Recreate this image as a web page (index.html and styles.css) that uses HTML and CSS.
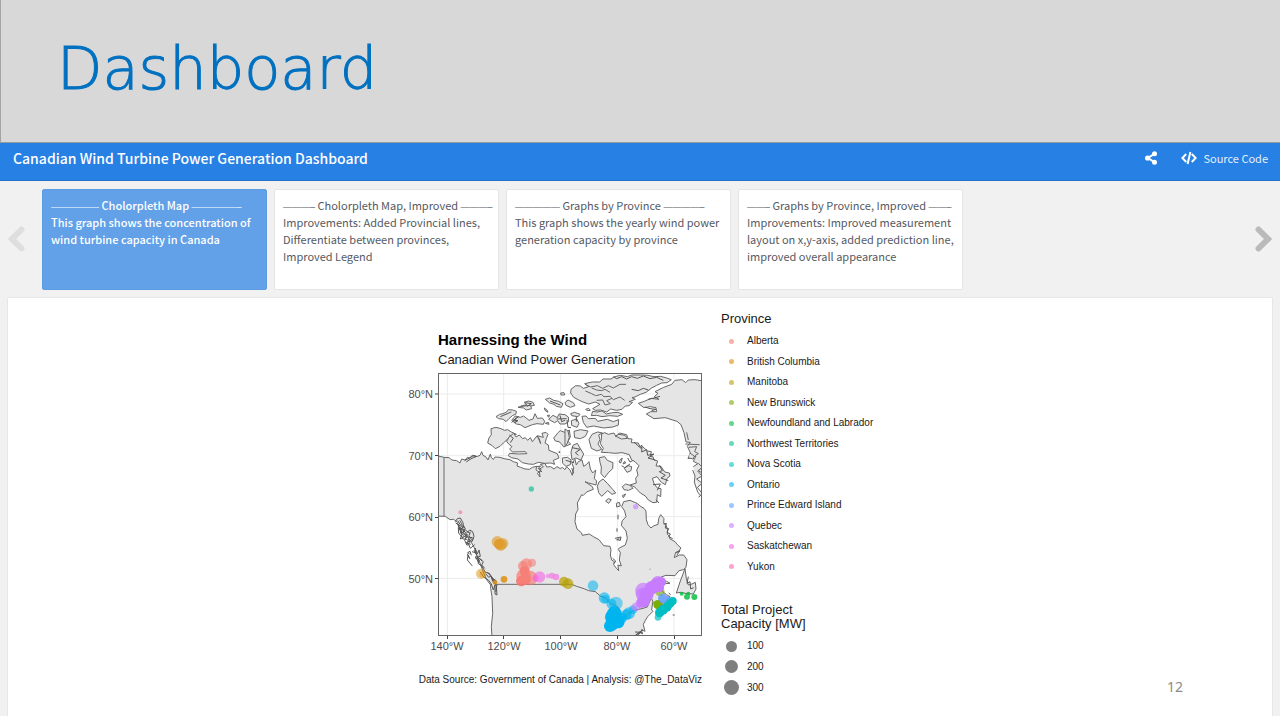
FILE: index.html
```html
<!DOCTYPE html>
<html lang="en">
<head>
<meta charset="utf-8">
<title>Canadian Wind Turbine Power Generation Dashboard</title>
<link rel="stylesheet" href="styles.css">
</head>
<body>
<header class="slide-header"><h1 class="slide-title">Dashboard</h1></header>
<nav class="navbar">
  <h2 class="brand">Canadian Wind Turbine Power Generation Dashboard</h2>
  <div class="nav-links">
    <button class="nav-button" type="button" aria-label="Share">
      <svg width="12" height="14" viewBox="0 0 12 14" fill="#fff"><path d="M9.5 2.8 2.8 7l6.7 4.2" fill="none" stroke="#fff" stroke-width="2"/><circle cx="9.5" cy="2.8" r="2.5"/><circle cx="2.6" cy="7" r="2.6"/><circle cx="9.5" cy="11.2" r="2.5"/></svg>
    </button>
    <a class="nav-link" href="#source">
      <svg width="16" height="14" viewBox="0 0 16 14" fill="none" stroke="#fff" stroke-width="2"><path d="M5.2 3 1.4 7l3.8 4M10.8 3l3.8 4-3.8 4M9.4 1 6.6 13"/></svg>
      <span>Source Code</span>
    </a>
  </div>
</nav>
<main class="storyboard">
  <div class="story-nav">
    <button class="arrow arrow-prev" type="button" aria-label="Previous"><svg width="18" height="28" viewBox="0 0 18 28"><path d="M14.5 3.500 5 13l9.500 9.500"/></svg></button>
    <div class="cards">
      <button class="card active" type="button"><span><span class="rule">—————-</span> Cholorpleth Map <span class="rule">—————–</span><br>This graph shows the concentration of wind turbine capacity in Canada</span></button>
      <button class="card" type="button"><span><span class="rule">———–</span> Cholorpleth Map, Improved <span class="rule">———–</span><br>Improvements: Added Provincial lines, Differentiate between provinces, Improved Legend</span></button>
      <button class="card" type="button"><span><span class="rule">—————</span> Graphs by Province <span class="rule">————–</span><br>This graph shows the yearly wind power generation capacity by province</span></button>
      <button class="card" type="button"><span><span class="rule">——–</span> Graphs by Province, Improved <span class="rule">——–</span><br>Improvements: Improved measurement layout on x,y-axis, added prediction line, improved overall appearance</span></button>
    </div>
    <button class="arrow arrow-next" type="button" aria-label="Next"><svg width="18" height="28" viewBox="0 0 18 28"><path d="M3.500 3.500 13 13l-9.500 9.500"/></svg></button>
  </div>
  <section class="panel">
    <figure class="chart">
      <svg class="plot" width="300" height="390" viewBox="408 310 300 390" role="img" aria-label="Map of Canadian wind power generation">
        <defs><clipPath id="frame"><rect x="26" y="11" width="789" height="786"/></clipPath></defs>
        <text class="plot-title" x="438" y="345">Harnessing the Wind</text>
        <text class="plot-subtitle" x="438" y="364">Canadian Wind Power Generation</text>
        <g class="map" transform="translate(430 370) scale(.33333)" clip-path="url(#frame)">
          <path class="grid" d="M52 11V797M221 11V797M392 11V797M562 11V797M732 11V797M26 72H815M26 257H815M26 440H815M26 625H815"/>
          <g class="land">
            <path d="M20 257 42 262 58 263 65 270 80 272 90 279 95 267 105 270 112 262 119 264 127 256 135 260 143 259 150 256 155 245 159 256 168 261 174 270 181 252 184 263 190 268 195 261 210 262 222 266 240 269 250 275 263 279 261 288 272 292 285 297 298 298 307 292 320 289 318 300 328 306 322 310 330 321 328 303 336 305 327 298 340 290 331 283 345 280 350 291 362 290 372 297 381 290 391 296 397 292 405 299 410 290 420 300 427 316 431 294 426 280 435 268 439 285 445 275 456 270 461 289 470 283 477 275 481 297 488 309 497 300 493 326 500 333 498 345 475 339 465 335 487 350 490 358 470 366 459 377 455 374 442 399 444 418 437 432 435 455 441 477 455 489 457 496 478 492 490 500 507 509 521 527 540 529 543 540 541 555 545 570 553 575 551 584 560 596 566 602 564 585 574 588 568 570 571 548 565 538 568 534 586 525 592 505 588 483 574 466 577 452 588 440 584 423 575 410 581 395 600 391 621 400 633 410 642 415 648 423 649 449 654 464 663 474 670 468 684 463 686 446 692 434 702 446 701 460 708 466 713 478 712 492 719 500 719 506 735 515 742 524 753 534 745 545 736 550 733 563 748 555 761 555 771 569 768 592 760 599 747 602 735 617 708 616 694 621 684 628 668 647 662 660 681 648 697 631 710 634 720 640 704 641 694 653 699 666 710 674 720 680 700 700 683 724 683 706 668 697 665 720 669 724 653 740 646 751 640 763 643 777 645 784 634 779 638 792 629 786 624 799H186L184 770 188 730 186 680 182 655 182 645 172 632 162 612 151 582 142 560 133 533 125 519 111 496 93 485 82 457 71 448 60 449 46 439 20 438Z"/>
            <path d="M183 176 198 172 213 176 223 181 233 179 244 186 259 193 245 197 232 208 220 219 210 229 196 236 187 227 173 219 177 204 184 194Z"/>
            <path d="M238 200 251 190 258 201 268 195 278 206 286 203 293 211 301 203 307 215 321 198 328 207 332 221 322 197 340 202 336 190 348 187 354 193 349 206 345 219 355 225 357 241 382 251 387 264 370 271 374 283 362 279 344 280 325 277 310 283 295 282 277 278 264 267 244 263 235 257 239 250 265 252 291 251 286 245 247 246 239 237 246 230 236 222 230 214Z"/>
            <path d="M198 140 209 133 219 131 230 126 235 119 248 120 259 124 258 132 247 137 237 146 228 155 220 148 206 146Z"/>
            <path d="M245 151 256 138 271 142 281 138 297 151 309 147 315 131 322 145 337 144 344 154 340 163 321 161 307 164 285 173 271 164 259 162Z"/>
            <path d="M264 112 277 107 290 104 282 97 296 93 309 97 313 106 302 108 305 116 289 120 281 114Z"/>
            <path d="M346 88 359 84 371 91 386 94 399 101 394 112 379 109 372 103 359 99ZM392 69 402 68 404 75 393 75ZM343 114 351 120 354 127 345 121ZM352 136 359 136 356 142ZM356 148 369 136 382 143 387 132 405 134 415 141 416 155 405 162 390 162 383 152 374 158ZM371 204 385 187 391 182 407 188 418 180 421 201 414 214 422 222 401 231 395 222 387 215 376 213ZM346 160 355 157 357 163ZM386 246 389 244 389 249ZM397 264 413 262 423 270 421 284 408 289 398 280ZM405 98 414 90 430 98 435 107 421 112 408 106Z"/>
            <path d="M422 131 434 127 450 133 444 140 425 137ZM424 152 440 147 447 160 441 172 425 166ZM456 139 468 138 475 146 496 145 503 154 532 148 550 155 566 149 565 165 549 171 521 174 491 168 470 172 460 157ZM432 184 451 179 474 183 466 199 451 206 434 203ZM405 177 414 183 418 202 411 222 405 227ZM429 226 442 220 451 236 461 252 453 270 438 264 426 269 423 246ZM467 118 476 115 481 121 471 122Z"/>
            <path d="M422 69 423 58 437 47 451 48 460 55 476 50 464 41 487 36 509 36 519 27 543 27 552 21 571 16 592 20 606 15 632 15 653 16 672 20 692 19 710 24 724 29 711 38 695 39 680 46 665 54 648 67 631 73 615 81 606 83 616 88 597 95 608 97 597 107 586 108 576 118 559 121 542 117 530 126 512 120 496 121 488 116 510 103 496 96 476 102 459 96 446 90 431 82Z"/>
            <path d="M485 54 500 60 515 62 525 58 540 67M465 43 482 51 502 47 518 55 535 47 550 54 570 43 588 43M498 77 514 73 522 80 540 79 550 89 570 81 584 91M466 63 485 71 497 77M500 91 518 90 525 105 541 101 530 92 546 85" fill="none"/>
            <path d="M488 124 501 126 516 123 529 132 548 128 564 127 578 133 563 139 539 137 516 140 500 136 484 137Z"/>
            <path d="M625 100 643 94 663 85 687 88 673 80 684 70 675 65 701 52 725 43 735 31 756 29 767 38 775 30 795 29 820 33V310L807 304 802 280 790 274 798 258 774 266 781 248 772 229 781 217 768 216 762 188 753 164 741 154 706 143 672 146 649 132 662 125 680 125 678 113 660 110 642 113Z"/>
            <path d="M515 192 524 188 535 193 552 189 558 200 568 189 590 194 594 206 606 207 604 218 625 219 632 235 638 230 652 243 664 245 661 260 669 260 672 270 683 273 678 288 693 289 704 306 718 309 720 318 711 325 706 344 694 337 681 320 667 325 673 343 683 355 693 356 692 380 682 374 680 397 669 398 655 390 646 378 631 369 614 351 600 345 619 339 617 325 624 315 620 300 627 287 615 275 605 270 598 254 576 248 555 250 535 248 514 247 520 235 511 221 514 207Z"/>
            <path d="M477 209 486 193 503 186 517 189 506 195 510 209 504 222 515 238 501 243 484 235ZM556 198 567 193 585 196 592 205 574 207ZM583 295 594 287 605 290 603 302 591 307ZM508 263 524 260 532 271 549 278 548 296 536 307 524 323 513 311 514 291 510 277ZM502 349 507 336 519 327 532 340 549 359 557 369 546 373 533 362 515 379 506 368ZM577 350 587 342 600 346 609 355 595 361 582 359ZM577 377 587 372 580 383ZM527 393 535 386 544 389 536 400ZM559 400 568 397 571 408 560 411ZM572 267 577 265 572 279 567 276ZM584 274 587 279 579 282Z"/>
            <path d="M765 596 750 636 739 669 752 667 771 671 790 672 798 657 796 637 786 642 775 645 769 626Z"/>
            <path d="M776 232 800 230 794 245 805 251 795 257M779 249 793 258 790 267 777 264M790 290 805 280 817 292 803 303 816 318 800 327 817 340 802 352 817 371 806 382M788 300 795 318 793 337 803 366 815 380M766 222 786 223 809 224M770 187 775 210"/>
          </g>
          <path class="line" d="M42 262V439M200 643H425L440 649 459 655 476 662 496 665 512 679 526 683 541 700 562 709 572 725 562 745 555 765 575 750 591 735 610 722 639 715 652 711 664 683 669 696"/>
          <g class="islands">
            <path d="M76 455 82 446 91 444 99 458 101 472 90 478 84 464 91 483 95 494 91 507 101 501 112 493 104 511 111 526 120 518 115 506 126 515 132 499 128 485 119 480 108 491 98 475 95 461 89 451M77 459 91 468M96 477 94 490 106 480 121 491M103 500 128 503M112 514 121 535 134 524M112 551 119 566 114 555 112 570 127 588M119 552 113 548 120 544 124 556M126 545 139 549 135 534 142 552 147 540 151 559 142 561 156 572 148 565 160 575 155 585 164 595M91 480 85 473 86 489 98 504M101 467 106 477 100 480M142 558 146 579 137 560M155 587 166 607 178 610 194 634 185 624 199 648 201 675 195 672 195 645 190 660 184 642 176 631 162 622 150 605M172 607 188 625 201 636M194 642 201 643 197 665"/>
            <path d="M83 452 95 470 88 474 103 483 98 490 112 500 106 505 117 514 108 519 122 523M121 485 117 497 125 509 131 506M90 486 100 497 97 506 108 508M132 540 140 556 136 564 148 570 144 580 158 590M168 612 176 622 183 618 188 634 196 628"/>
            <path d="M104 272 120 263 132 256 139 259 120 268 109 276M245 158 255 147 266 140M249 150 264 152 254 158 259 142M273 109 302 106M286 98 304 101 292 109M360 93 391 105M380 147 410 146M390 136 395 155 405 151M211 140 244 126M238 195 250 205 241 218M426 233 451 238 436 248 445 256M407 271 432 278M425 294 431 310M439 140V155M411 150 414 172 423 173M612 216 628 231 636 226 635 246 650 239 653 256 672 252 654 264 676 270M688 286 697 302 688 305 706 316 693 324 715 332M669 344 691 342 682 361M678 389 687 399M593 264 600 276 608 272M575 287 584 293 600 282M555 505 573 501 571 511 560 509 568 506M564 434V448M561 475V485M548 565 557 573 552 581M615 786 635 787 617 795 639 779M659 598 661 597M716 669 722 674M728 735H734M775 620 771 640 780 635 782 657 791 653"/>
            <path d="M701 462 709 460 706 474 716 476 711 487 721 492 716 500 728 506M736 548 750 542 740 556M320 290 332 288 324 296 334 298M550 20 560 26 575 20 590 27 605 20 622 25 640 18 660 26 680 22 700 31M605 58 625 62 640 55 655 60M645 111 660 116 678 118 665 122M655 88 672 84 690 79"/>
          </g>
          <g class="farms">
            <circle cx="304" cy="357" r="8" fill="#00c094" opacity=".65"/>
            <circle cx="91" cy="427" r="6" fill="#ff65ae" opacity=".6"/>
            <g fill="#de8c00" opacity=".8"><circle cx="202" cy="515" r="17" opacity=".65"/><circle cx="212" cy="524" r="18" opacity=".8"/><circle cx="219" cy="520" r="16" opacity=".6"/><circle cx="207" cy="522" r="15"/><circle cx="153" cy="611" r="15" opacity=".6"/><circle cx="158" cy="614" r="10" opacity=".5"/><circle cx="222" cy="628" r="10"/><circle cx="195" cy="637" r="7"/></g>
            <g fill="#f8766d" opacity=".9"><circle cx="289" cy="582" r="17" opacity=".65"/><circle cx="279" cy="588" r="15" opacity=".7"/><circle cx="306" cy="578" r="12" opacity=".6"/><circle cx="284" cy="603" r="15"/><circle cx="281" cy="619" r="22" opacity=".75"/><circle cx="300" cy="624" r="22" opacity=".7"/><circle cx="274" cy="633" r="16"/><circle cx="286" cy="628" r="17"/></g>
            <g fill="#f564e3" opacity=".75"><circle cx="329" cy="621" r="17" opacity=".8"/><circle cx="318" cy="625" r="10"/><circle cx="354" cy="618" r="7" opacity=".7"/><circle cx="366" cy="617" r="9" opacity=".8"/><circle cx="378" cy="621" r="10" opacity=".8"/></g>
            <g fill="#b79f00"><circle cx="402" cy="635" r="15" opacity=".7"/><circle cx="414" cy="641" r="16" opacity=".7"/></g>
            <g fill="#00b4f0"><circle cx="489" cy="647" r="16" opacity=".55"/><circle cx="523" cy="684" r="17" opacity=".6"/><circle cx="526" cy="688" r="12" opacity=".5"/><circle cx="558" cy="700" r="20" opacity=".5"/><circle cx="544" cy="701" r="15" opacity=".6"/><circle cx="597" cy="730" r="18" opacity=".6"/><circle cx="589" cy="734" r="16" opacity=".7"/><circle cx="553" cy="731" r="22"/><circle cx="546" cy="741" r="21"/><circle cx="564" cy="755" r="20"/><circle cx="546" cy="762" r="20"/><circle cx="540" cy="768" r="18"/><circle cx="576" cy="744" r="15" opacity=".8"/><circle cx="609" cy="719" r="13" opacity=".6"/></g>
            <g fill="#7cae00"><circle cx="684" cy="704" r="14"/><circle cx="690" cy="665" r="14" opacity=".6"/></g>
            <g fill="#c77cff"><circle cx="617" cy="410" r="8" opacity=".6"/><circle cx="640" cy="662" r="24" opacity=".7"/><circle cx="637" cy="673" r="20" opacity=".7"/><circle cx="650" cy="672" r="21"/><circle cx="665" cy="653" r="20"/><circle cx="679" cy="646" r="21"/><circle cx="692" cy="636" r="16"/><circle cx="683" cy="636" r="18" opacity=".8"/><circle cx="687" cy="652" r="15"/><circle cx="641" cy="693" r="19"/><circle cx="632" cy="700" r="15" opacity=".8"/><circle cx="617" cy="711" r="13" opacity=".6"/></g>
            <g fill="#619cff" opacity=".85"><circle cx="698" cy="685" r="14"/><circle cx="711" cy="691" r="13"/></g>
            <g fill="#00bfc4"><circle cx="728" cy="693" r="12"/><circle cx="720" cy="701" r="13"/><circle cx="711" cy="711" r="14"/><circle cx="699" cy="719" r="15"/><circle cx="689" cy="728" r="14"/><circle cx="684" cy="742" r="10" opacity=".7"/></g>
            <g fill="#00ba38" opacity=".8"><circle cx="755" cy="671" r="6"/><circle cx="771" cy="680" r="9"/><circle cx="775" cy="671" r="6"/><circle cx="793" cy="681" r="9"/></g>
          </g>
        </g>
        <rect class="frame" x="438.5" y="373.5" width="263" height="262"/>
        <path class="ticks" d="M435 394h3M435 455.5h3M435 517.5h3M435 578.5h3M447.5 636v3M503.5 636v3M560.5 636v3M617.5 636v3M674.5 636v3"/>
        <g class="axis-y"><text x="433" y="398">80°N</text><text x="433" y="460">70°N</text><text x="433" y="521">60°N</text><text x="433" y="583">50°N</text></g>
        <g class="axis-x"><text x="447" y="650">140°W</text><text x="504" y="650">120°W</text><text x="561" y="650">100°W</text><text x="617" y="650">80°W</text><text x="674" y="650">60°W</text></g>
        <text class="caption" x="702" y="683">Data Source: Government of Canada | Analysis: @The_DataViz</text>
      </svg>
      <figcaption class="legend">
        <h3 class="legend-title">Province</h3>
        <ul class="legend-list provinces">
          <li><i class="dot alberta"></i>Alberta</li>
          <li><i class="dot bc"></i>British Columbia</li>
          <li><i class="dot manitoba"></i>Manitoba</li>
          <li><i class="dot nb"></i>New Brunswick</li>
          <li><i class="dot nl"></i>Newfoundland and Labrador</li>
          <li><i class="dot nwt"></i>Northwest Territories</li>
          <li><i class="dot ns"></i>Nova Scotia</li>
          <li><i class="dot ontario"></i>Ontario</li>
          <li><i class="dot pei"></i>Prince Edward Island</li>
          <li><i class="dot quebec"></i>Quebec</li>
          <li><i class="dot sask"></i>Saskatchewan</li>
          <li><i class="dot yukon"></i>Yukon</li>
        </ul>
        <h3 class="legend-title capacity-title">Total Project<br>Capacity [MW]</h3>
        <ul class="legend-list capacities">
          <li><i class="dot size-100"></i>100</li>
          <li><i class="dot size-200"></i>200</li>
          <li><i class="dot size-300"></i>300</li>
        </ul>
      </figcaption>
    </figure>
    <span class="page-number">12</span>
  </section>
</main>
</body>
</html>
```
FILE: styles.css
```css
* { box-sizing: border-box; }
body {
  margin: 0;
  min-height: 100vh;
  display: flex;
  flex-direction: column;
  padding-bottom: 4px;
  background: #fff;
  font-family: "Noto Sans CJK SC", "Noto Sans", sans-serif;
}
h1, h2, h3, ul, figure { margin: 0; padding: 0; }
button { font: inherit; border: 0; background: none; padding: 0; }
svg { display: block; }

.slide-header {
  height: 143px;
  padding: 0 56px 6px;
  display: flex;
  align-items: center;
  background: #d8d8d8;
  border-left: 1px solid #a3a3a3;
  border-bottom: 1px solid #999;
}
.slide-title {
  font-family: "DejaVu Sans", sans-serif;
  font-size: 59px;
  font-weight: 200;
  color: #0070c0;
  -webkit-text-stroke: 1px #0070c0;
}

.navbar {
  height: 38px;
  padding: 0 12px 7px 13px;
  display: flex;
  align-items: center;
  justify-content: space-between;
  background: #2780e3;
  border-bottom: 1px solid #2272cb;
  color: #fff;
}
.brand { font-size: 14px; line-height: 20px; font-weight: 500; }
.nav-links { display: flex; align-items: center; gap: 24px; }
.nav-link {
  display: flex;
  align-items: center;
  gap: 6px;
  color: #e4effc;
  font-size: 11px;
  line-height: 20px;
  text-decoration: none;
}

.storyboard {
  flex: 1;
  display: flex;
  flex-direction: column;
  background: #f1f1f1;
  padding: 8px 7px 0;
}
.story-nav { display: flex; align-items: center; }
.arrow { width: 18px; flex: none; }
.arrow path { fill: none; stroke: #bababa; stroke-width: 6; stroke-linecap: round; stroke-linejoin: miter; }
.arrow-prev path { stroke: #dedede; }
.cards {
  flex: 1;
  display: grid;
  grid-template-columns: repeat(4, 225px);
  gap: 7px;
  padding-left: 17px;
}
.card {
  height: 101px;
  padding: 7px 1px 7px 8px;
  text-align: left;
  display: flex;
  align-items: flex-start;
  font-size: 11px;
  line-height: 17px;
  color: #55595f;
  background: #fff;
  border: 1px solid #e5e5e5;
  border-radius: 2px;
}
.card.active { color: #fff; background: #62a0e7; border-color: #5e9ce2; font-weight: 500; }
.rule { font-family: "Liberation Sans", sans-serif; font-size: 9px; font-weight: 400; line-height: 1; }

.panel {
  flex: 1;
  position: relative;
  margin-top: 7px;
  background: #fff;
  border: 1px solid #e7e7e7;
  border-bottom: 0;
  border-radius: 2px 2px 0 0;
}
.chart {
  display: flex;
  justify-content: center;
  gap: 13px;
  padding-top: 12px;
  font-family: "Liberation Sans", Arial, sans-serif;
}
.plot-title { font-size: 15px; font-weight: 700; fill: #000; }
.plot-subtitle { font-size: 13px; fill: #1a1a1a; }
.caption { font-size: 10px; fill: #1a1a1a; text-anchor: end; }
.axis-y, .axis-x { font-size: 11px; fill: #4d4d4d; }
.axis-y { text-anchor: end; }
.axis-x { text-anchor: middle; }
.frame { fill: none; stroke: #666; }
.ticks { fill: none; stroke: #444; }
.grid { fill: none; stroke: #ebebeb; stroke-width: 3; }
.land { fill: #e5e5e5; stroke: #666; stroke-width: 3; stroke-linejoin: round; }
.line { fill: none; stroke: #6a6a6a; stroke-width: 3; }
.islands { fill: none; stroke: #555; stroke-width: 3; }

.legend { width: 151px; padding-top: 2px; color: #1a1a1a; white-space: nowrap; }
.legend-title { font-size: 13px; line-height: 14px; font-weight: 400; }
.legend-list {
  list-style: none;
  padding-top: 5px;
  display: grid;
  grid-auto-rows: 1fr;
}
.provinces { height: 251px; }
.capacities { height: 67px; }
.legend-list li {
  display: grid;
  grid-template-columns: 20px 1fr;
  align-items: center;
  column-gap: 6px;
  font-size: 10px;
  line-height: 20px;
}
.dot { width: 5px; height: 5px; border-radius: 50%; justify-self: center; }
.alberta { background: #fbada7; }
.bc { background: #ebba66; }
.manitoba { background: #d4c566; }
.nb { background: #b0ce66; }
.nl { background: #66d688; }
.nwt { background: #66d9bf; }
.ns { background: #66d9dc; }
.ontario { background: #66d2f6; }
.pei { background: #a0c4ff; }
.quebec { background: #ddb0ff; }
.sask { background: #f9a2ee; }
.yukon { background: #ffa3ce; }
.capacity-title { padding-top: 26px; }
.size-100 { width: 11px; height: 11px; background: #7f7f7f; }
.size-200 { width: 13px; height: 13px; background: #7f7f7f; }
.size-300 { width: 15px; height: 15px; background: #7f7f7f; }
.page-number {
  position: absolute;
  right: 89px;
  bottom: 19px;
  font-family: "Noto Sans", sans-serif;
  font-size: 14px;
  line-height: 20px;
  color: #8b8b8b;
}
```
